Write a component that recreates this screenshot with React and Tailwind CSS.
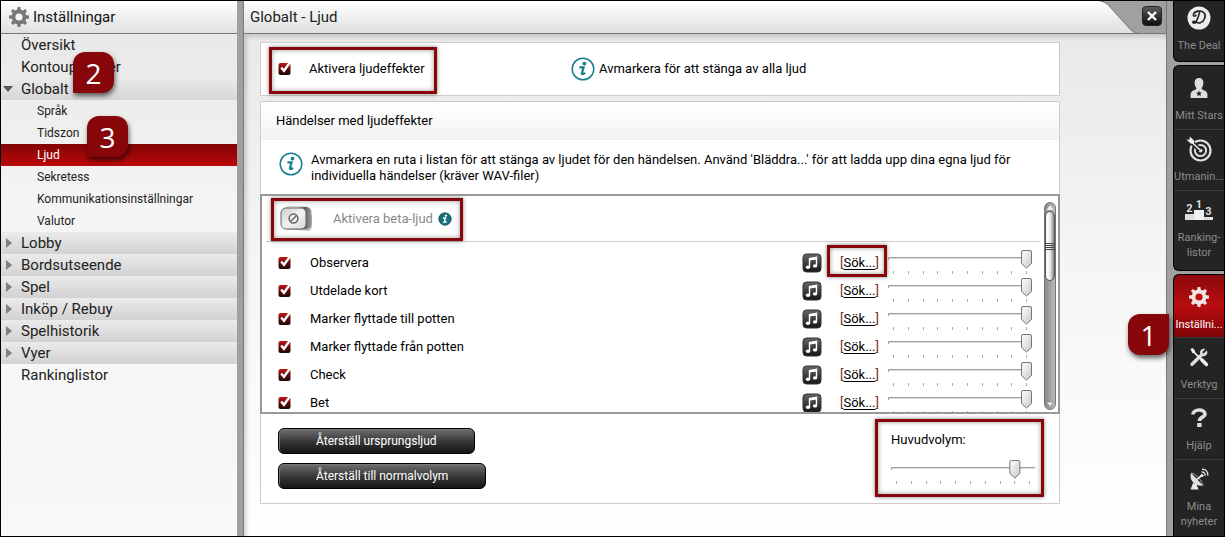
import { useState } from 'react';
import clsx from 'clsx';

const menu = [
  { label: 'Översikt' },
  { label: 'Kontouppgifter', badge: '2' },
  {
    label: 'Globalt',
    open: true,
    children: ['Språk', 'Tidszon', 'Ljud', 'Sekretess', 'Kommunikationsinställningar', 'Valutor'],
  },
  { label: 'Lobby', group: true },
  { label: 'Bordsutseende', group: true },
  { label: 'Spel', group: true },
  { label: 'Inköp / Rebuy', group: true },
  { label: 'Spelhistorik', group: true },
  { label: 'Vyer', group: true },
  { label: 'Rankinglistor' },
];

const sounds = [
  'Observera',
  'Utdelade kort',
  'Marker flyttade till potten',
  'Marker flyttade från potten',
  'Check',
  'Bet',
];

const teeth = [0, 45, 90, 135, 180, 225, 270, 315];

/**
 * Icons
 */
const GearIcon = ({ className, fill, hole }) => (
  <svg viewBox="0 0 20 20" className={className} fill={fill} aria-hidden="true">
    {teeth.map((angle) => (
      <path key={angle} d="M8 4 L8.6 0 H11.4 L12 4 Z" transform={`rotate(${angle} 10 10)`} />
    ))}
    <circle cx="10" cy="10" r="7.4" />
    <circle cx="10" cy="10" r="3.6" fill={hole} />
  </svg>
);

const InfoIcon = () => (
  <svg viewBox="0 0 24 24" className="size-6 shrink-0" fill="none" aria-hidden="true">
    <circle cx="12" cy="12" r="10.8" stroke="#16808c" strokeWidth="1.5" />
    <circle cx="13.4" cy="6.6" r="1.9" fill="#16808c" />
    <path d="M8.4 10.4 H12.6 L10.9 16.2 C10.7 17.6 12.4 17.4 14 15.8" stroke="#16808c" strokeWidth="2.2" />
  </svg>
);

const CheckIcon = () => (
  <svg viewBox="0 0 14 14" className="size-[14px]" aria-hidden="true">
    <defs>
      <linearGradient id="tick-box" x1="0" y1="0" x2="0" y2="1">
        <stop offset="0" stopColor="#c01818" />
        <stop offset="0.55" stopColor="#5a0808" />
        <stop offset="1" stopColor="#1a0a0a" />
      </linearGradient>
    </defs>
    <rect x="0.5" y="1" width="12" height="12" rx="2" fill="url(#tick-box)" />
    <path d="M3.2 5.6 L6 8.8 L11.8 0.6" fill="none" stroke="#fff" strokeWidth="2.4" />
  </svg>
);

const MusicIcon = () => (
  <svg viewBox="0 0 20 20" className="size-5" aria-hidden="true">
    <defs>
      <linearGradient id="music-box" x1="0" y1="0" x2="0" y2="1">
        <stop offset="0" stopColor="#666" />
        <stop offset="1" stopColor="#161616" />
      </linearGradient>
    </defs>
    <rect x="1" y="1" width="18" height="18" rx="3.5" fill="url(#music-box)" stroke="#333" />
    <path d="M7.5 14 V5.6 L14.5 4.4 V12.6" fill="none" stroke="#fff" strokeWidth="1.4" />
    <path d="M7.5 6.6 L14.5 5.4" stroke="#fff" strokeWidth="2" />
    <ellipse cx="6" cy="14.2" rx="2.2" ry="1.7" fill="#fff" />
    <ellipse cx="13" cy="12.9" rx="2.2" ry="1.7" fill="#fff" />
  </svg>
);

const DealIcon = () => (
  <svg viewBox="0 0 24 24" className="size-6" fill="none" aria-hidden="true">
    <circle cx="12" cy="12" r="11.5" fill="#ececec" />
    <path d="M12.6 6.4 C11.6 10 10.4 14 8.4 16.8 M8.4 16.8 C5.8 17.8 5 15.6 7 15.2 C9 15 10.2 17.8 13.2 16.8 C17.8 15.2 19.4 9.6 17 6.8 C14.4 3.8 7.4 4.8 6.4 8.4 C6 10.6 8.4 10.6 9 9.2" stroke="#222" strokeWidth="1.6" strokeLinecap="round" />
  </svg>
);

const PersonIcon = () => (
  <svg viewBox="0 0 20 22" className="h-[22px] w-5" fill="#dedede" aria-hidden="true">
    <path d="M10 1 C13 1 14.6 3 14.4 6 C14.2 9 13 10.2 12.6 11.2 C12.4 13.2 18.4 13 18.4 17.4 V21 H1.6 V17.4 C1.6 13 7.6 13.2 7.4 11.2 C7 10.2 5.8 9 5.6 6 C5.4 3 7 1 10 1 Z" />
    <path d="M10 13.4 L10.8 15.5 L13 15.6 L11.3 17 L11.9 19.2 L10 18 L8.1 19.2 L8.7 17 L7 15.6 L9.2 15.5 Z" fill="#222" />
  </svg>
);

const TargetIcon = () => (
  <svg viewBox="0 0 26 26" className="size-[26px]" fill="none" aria-hidden="true">
    <circle cx="14.5" cy="14.5" r="10" stroke="#dedede" strokeWidth="2.2" />
    <circle cx="14.5" cy="14.5" r="5.6" stroke="#dedede" strokeWidth="2" />
    <circle cx="14.5" cy="14.5" r="2" fill="#dedede" />
    <path d="M3 4 L14 14" stroke="#222" strokeWidth="4.5" />
    <path d="M4 4.5 L14 14" stroke="#eee" strokeWidth="1.7" />
    <path d="M0.5 3.5 L3.5 3.8 L3.8 0.5 L8 4.5 L8 8 L4.5 7.5 Z" fill="#eee" />
  </svg>
);

const PodiumIcon = () => (
  <span className="flex items-end text-[11px] leading-[10px] font-bold text-[#dedede]" aria-hidden="true">
    <span className="flex w-[9px] flex-col items-center">
      2<span className="h-[6px] w-full bg-[#dedede]" />
    </span>
    <span className="flex w-[10px] flex-col items-center">
      1<span className="h-[10px] w-full bg-[#f0f0f0]" />
    </span>
    <span className="flex w-[9px] flex-col items-center">
      3<span className="h-[3px] w-full bg-[#dedede]" />
    </span>
  </span>
);

const ToolsIcon = () => (
  <svg viewBox="0 0 20 20" className="size-5" fill="none" aria-hidden="true">
    <path d="M3 17.2 L12.5 8" stroke="#dedede" strokeWidth="3.4" strokeLinecap="round" />
    <path d="M17.8 3.6 L14.6 6.6 L13.2 5.2 L16.2 2 C13.4 0.6 10.2 3.4 11.2 6.6 C12.2 9.6 15.6 9.8 17.4 8 C18.6 6.8 18.6 4.8 17.8 3.6 Z" fill="#dedede" />
    <path d="M1.4 2 L3.4 1 L6 3.4 L6 5 L14 13 L12.8 14.2 L4.8 6.2 L3.4 6 Z" fill="#eee" />
    <path d="M13 13 L17.4 17.4" stroke="#eee" strokeWidth="3.6" strokeLinecap="round" />
  </svg>
);

const HelpIcon = () => (
  <svg viewBox="0 0 18 20" className="h-5 w-[18px]" fill="none" aria-hidden="true">
    <path d="M3 6.4 C3 0.8 15 0.6 15 6 C15 9.4 9.4 8.8 9.4 13" stroke="#dedede" strokeWidth="3.6" />
    <rect x="7.2" y="15" width="4.4" height="4" fill="#dedede" />
  </svg>
);

const DishIcon = () => (
  <svg viewBox="0 0 20 22" className="h-[22px] w-5" fill="none" aria-hidden="true">
    <path d="M2.2 5 C-0.4 10 4.4 19 14 17.6 Z" fill="#dedede" />
    <path d="M2.2 5 C6 5.4 12.8 11.6 14 17.6" stroke="#aaa" />
    <path d="M4 15 L1.6 21.4 H9.6 L7.4 16 Z" fill="#e8e8e8" />
    <path d="M8 11.4 L13 7.2" stroke="#eee" strokeWidth="1.6" />
    <circle cx="13" cy="7.4" r="1.5" fill="#eee" />
    <path d="M12.6 4 C14.8 3.8 16.4 5.4 16.2 7.8 M13 1.2 C16.8 1 19.2 3.8 18.8 7.6" stroke="#dedede" strokeWidth="1.4" />
  </svg>
);

/**
 * Red frame round a highlighted control
 */
const Frame = ({ className }) => (
  <span
    className={clsx(
      'pointer-events-none absolute border-3 border-[#860609] shadow-[0_0_4px_rgba(0,0,0,0.5),inset_0_0_5px_rgba(0,0,0,0.4)]',
      className
    )}
  />
);

const StepBadge = ({ className, children }) => (
  <span
    className={clsx(
      "absolute z-10 flex size-[41px] items-center justify-center rounded-xl bg-[#860609] font-['Open_Sans',sans-serif] text-[28px] leading-8 text-white shadow-[1px_3px_5px_rgba(0,0,0,0.6)]",
      className
    )}
  >
    {children}
  </span>
);

const Slider = ({ label, initial }) => {
  const [value, setValue] = useState(initial);
  const x = 5.5 + (value / 100) * 133;

  return (
    <span className="relative block h-[26px] w-36">
      <svg viewBox="0 0 144 26" className="block h-[26px] w-36" aria-hidden="true">
        <defs>
          <linearGradient id="thumb" x1="0" y1="0" x2="1" y2="1">
            <stop offset="0" stopColor="#fff" />
            <stop offset="1" stopColor="#c8c8c8" />
          </linearGradient>
        </defs>
        <path d="M0.5 10 V7.5 H144" fill="none" stroke="#9a9f9a" />
        <path d="M1 8.5 H144" stroke="#ddd" />
        {Array.from({ length: 10 }, (_, i) => (
          <path key={i} d={`M${Math.round(i * 14.8) + 5.5} 21 v3`} stroke="#aaa" />
        ))}
        <path
          d={`M${x - 5} 2 q0 -1.5 1.5 -1.5 h7 q1.5 0 1.5 1.5 V13.5 L${x} 18 L${x - 5} 13.5 Z`}
          fill="url(#thumb)"
          stroke="#777"
        />
      </svg>
      <input
        type="range"
        aria-label={label}
        value={value}
        onChange={(e) => setValue(Number(e.target.value))}
        className="absolute inset-0 w-full cursor-pointer opacity-0"
      />
    </span>
  );
};

const Check = ({ label, children }) => (
  <label className="relative flex cursor-pointer items-center">
    <input type="checkbox" defaultChecked aria-label={label} className="peer absolute size-[14px] opacity-0" />
    <CheckIcon />
    {children}
  </label>
);

/**
 * Left settings menu
 */
const Sidebar = () => (
  <aside className="w-[236px] shrink-0 bg-linear-to-b from-[#e6e6e6] via-[#f5f5f5] via-40% to-[#f8f8f8]">
    <div className="flex h-[33px] items-center gap-1 border-b border-[#777] bg-linear-to-b from-white to-[#e0e0e0] pl-2">
      <GearIcon className="size-5" fill="#777" hole="#f4f4f4" />
      <h2 className="text-[15px] text-[#111]">Inställningar</h2>
    </div>
    <nav>
      <ul className="text-[15px] leading-[22px] text-[#222]">
        {menu.map((item) => (
          <li key={item.label} className="relative">
            <a
              href="#"
              className={clsx(
                'flex h-[22px] items-center',
                item.open && 'bg-linear-to-b from-[#eaeaea] to-[#d6d6d6]',
                item.group && 'bg-linear-to-b from-[#ebebeb] to-[#d2d2d2]'
              )}
            >
              <span className="w-5 pl-[2px]">
                {item.open && (
                  <svg viewBox="0 0 10 6" className="h-[6px] w-[10px]" fill="#555" aria-hidden="true">
                    <path d="M0 0 H10 L5 6 Z" />
                  </svg>
                )}
                {item.group && (
                  <svg viewBox="0 0 6 10" className="ml-[3px] h-[10px] w-[6px]" fill="#808080" aria-hidden="true">
                    <path d="M0 0 V10 L6 5 Z" />
                  </svg>
                )}
              </span>
              {item.label}
            </a>
            {item.badge && <StepBadge className="-top-1 left-[72px] rounded-bl-none">{item.badge}</StepBadge>}
            {item.children && (
              <ul className="text-xs leading-[22px]">
                {item.children.map((child) => (
                  <li key={child} className="relative">
                    <a
                      href="#"
                      className={clsx(
                        'block h-[22px] pl-9',
                        child === 'Ljud' && 'bg-linear-to-b from-[#800505] to-[#bd0909] text-white'
                      )}
                    >
                      {child}
                    </a>
                    {child === 'Tidszon' && <StepBadge className="-top-[6px] left-[86px] rounded-bl-sm">3</StepBadge>}
                  </li>
                ))}
              </ul>
            )}
          </li>
        ))}
      </ul>
    </nav>
  </aside>
);

const SoundRow = ({ name, framed }) => (
  <li className="flex h-7 items-center pr-2 pl-3">
    <Check label={name}>
      <span className="ml-[18px]">{name}</span>
    </Check>
    <span className="ml-auto">
      <MusicIcon />
    </span>
    <span className="relative ml-[18px] w-12">
      <a href="#" className="text-black">
        <span className="text-[#7a2a10]">[</span>
        <span className="underline underline-offset-2">Sök...</span>
        <span className="text-[#7a2a10]">]</span>
      </a>
      {framed && <Frame className="-top-2 -left-[13px] h-8 w-[60px]" />}
    </span>
    <Slider label={`Volym ${name}`} initial={100} />
  </li>
);

const ScrollBar = () => (
  <div className="mt-[6px] mb-[2px] flex w-3 shrink-0 flex-col rounded-full border border-[#777] bg-linear-to-r from-[#8a8a8a] to-[#bbb]" aria-hidden="true">
    <svg viewBox="0 0 10 8" className="h-2 w-[10px]">
      <path d="M1.5 7 L5 2 L8.5 7 Z" fill="#eee" />
    </svg>
    <div className="flex h-[70px] flex-col items-center justify-center gap-px rounded-full border border-[#555] bg-linear-to-r from-white via-[#eee] to-[#888]">
      <span className="h-px w-2 bg-[#444]" />
      <span className="h-px w-2 bg-[#444]" />
      <span className="h-px w-2 bg-[#444]" />
      <span className="h-px w-2 bg-[#444]" />
    </div>
    <svg viewBox="0 0 10 8" className="mt-auto h-2 w-[10px]">
      <path d="M1.5 1 L5 6 L8.5 1 Z" fill="#eee" stroke="#777" strokeWidth="0.6" />
    </svg>
  </div>
);

const DarkButton = ({ children }) => (
  <button
    type="button"
    className="h-[26px] rounded-md border border-black bg-linear-to-b from-[#6a6a6a] from-5% via-[#3a3a3a] via-50% to-[#141414] px-[37px] text-xs leading-6 text-white shadow-[inset_1px_1px_0_#777]"
  >
    {children}
  </button>
);

/**
 * Sound settings page
 */
const SoundPage = () => (
  <main className="flex min-w-0 flex-1 flex-col border-x border-[#777] bg-[#a0a0a0]">
    <header className="flex h-[33px] border-b border-[#777]">
      <h1 className="flex-1 bg-linear-to-b from-white to-[#dfdfdf] pl-[6px] text-[15px] leading-8 text-[#222]">
        Globalt - Ljud
      </h1>
      <svg viewBox="0 0 38 32" className="h-8 w-[38px]" aria-hidden="true">
        <defs>
          <linearGradient id="tab-end" x1="0" y1="0" x2="0" y2="1">
            <stop offset="0" stopColor="#fff" />
            <stop offset="1" stopColor="#dfdfdf" />
          </linearGradient>
        </defs>
        <path d="M0 0 C5 1 7 3 9 5 L30 28 C32 30 34 32 38 32 H0 Z" fill="url(#tab-end)" />
        <path d="M0 0 C5 1 7 3 9 5 L30 28 C32 30 34 32 38 32" fill="none" stroke="#777" />
      </svg>
      <button
        type="button"
        aria-label="Stäng"
        className="mt-[5px] mr-1 ml-1 flex size-5 items-center justify-center rounded border border-[#222] bg-linear-to-b from-[#5c5c5c] to-[#111]"
      >
        <svg viewBox="0 0 10 10" className="size-[10px]" stroke="#fff" strokeWidth="2.4" aria-hidden="true">
          <path d="M1 1 L9 9 M9 1 L1 9" />
        </svg>
      </button>
    </header>

    <div className="flex-1 bg-linear-to-b from-[#e9e9e9] via-[#f5f5f5] via-45% to-white pt-2 pr-[106px] pb-6 pl-4 text-[13px] text-black shadow-[inset_3px_3px_4px_rgba(0,0,0,0.15)]">
      <section className="flex h-[54px] items-center border border-[#ccc] bg-white pl-[17px]">
        <div className="relative w-[293px]">
          <Check label="Aktivera ljudeffekter">
            <span className="ml-[17px]">Aktivera ljudeffekter</span>
          </Check>
          <Frame className="-top-3 -left-[9px] h-[47px] w-[168px]" />
        </div>
        <InfoIcon />
        <p className="ml-1">Avmarkera för att stänga av alla ljud</p>
      </section>

      <section className="mt-[5px] border border-[#ccc] bg-white">
        <h3 className="h-[38px] border-b border-[#eee] bg-linear-to-b from-white to-[#f3f3f3] pl-[15px] leading-[38px]">
          Händelser med ljudeffekter
        </h3>
        <div className="flex h-[54px] items-start gap-2 pt-3 pl-[18px]">
          <InfoIcon />
          <p className="max-w-[730px] leading-4">
            Avmarkera en ruta i listan för att stänga av ljudet för den händelsen. Använd 'Bläddra...' för att ladda
            upp dina egna ljud för individuella händelser (kräver WAV-filer)
          </p>
        </div>

        <div className="-mx-px flex h-[220px] overflow-hidden border-2 border-[#999] pr-[2px] pl-1">
          <div className="mr-1 flex-1">
            <div className="relative flex h-[46px] items-center border-b border-[#ccc] pl-[14px]">
              <button type="button" role="switch" aria-checked="false" aria-label="Aktivera beta-ljud">
                <svg viewBox="0 0 34 28" className="h-7 w-[34px]" aria-hidden="true">
                  <defs>
                    <linearGradient id="switch-side" x1="0" y1="0" x2="1" y2="0">
                      <stop offset="0.5" stopColor="#fff" />
                      <stop offset="0.75" stopColor="#555" />
                      <stop offset="1" stopColor="#999" />
                    </linearGradient>
                    <linearGradient id="switch-face" x1="0" y1="0" x2="1" y2="1">
                      <stop offset="0" stopColor="#ccc" />
                      <stop offset="0.5" stopColor="#f2f2f2" />
                      <stop offset="1" stopColor="#d8d8d8" />
                    </linearGradient>
                  </defs>
                  <path d="M6 24 L28 26 Q32 26 32 20 V10 Z" fill="#c4c4c4" />
                  <rect x="3" y="2" width="28" height="22" rx="5" fill="url(#switch-side)" stroke="#777" strokeWidth="0.6" />
                  <rect x="1" y="3" width="25" height="21" rx="5" fill="url(#switch-face)" stroke="#666" />
                  <circle cx="13.5" cy="13.5" r="4.4" fill="none" stroke="#666" strokeWidth="1.5" />
                  <path d="M10.5 16.5 L16.5 10.5" stroke="#666" strokeWidth="1.5" />
                </svg>
              </button>
              <span className="ml-[19px] text-[#888]">Aktivera beta-ljud</span>
              <svg viewBox="0 0 14 14" className="ml-[5px] size-[14px]" aria-hidden="true">
                <circle cx="7" cy="7" r="6.2" fill="#14707c" stroke="#0b4750" strokeWidth="0.8" />
                <circle cx="8" cy="3.6" r="1.2" fill="#fff" />
                <path d="M5 6 H7.4 L6.2 10.2 L8.6 9.8" fill="none" stroke="#fff" strokeWidth="1.6" />
              </svg>
              <Frame className="top-[2px] left-[5px] h-[43px] w-[192px]" />
            </div>
            <ul className="pt-[7px]">
              {sounds.map((name, index) => (
                <SoundRow key={name} name={name} framed={index === 0} />
              ))}
            </ul>
          </div>
          <ScrollBar />
        </div>

        <div className="flex justify-between pt-[14px] pr-6 pb-[14px] pl-[17px]">
          <div className="flex flex-col items-start gap-[9px]">
            <DarkButton>Återställ ursprungsljud</DarkButton>
            <DarkButton>Återställ till normalvolym</DarkButton>
          </div>
          <div className="relative">
            <p className="mt-[2px] mb-[10px]">Huvudvolym:</p>
            <Slider label="Huvudvolym" initial={89} />
            <Frame className="-top-[9px] -left-4 h-[78px] w-[169px]" />
          </div>
        </div>
      </section>
    </div>
  </main>
);

/**
 * Right toolbar
 */
const NavItem = ({ icon, label, active, first }) => (
  <a
    href="#"
    className={clsx(
      'flex flex-col items-center',
      active && 'rounded-tl-md bg-linear-to-b from-[#8c0a0c] via-[#b80c0f] to-[#7d0507] pt-[10px] pb-[5px] text-white',
      first && 'pt-2 pb-[6px] text-[#8c8c8c]',
      !active && !first && 'border-t border-[#3a3a3a] pt-[7px] pb-[6px] text-[#8c8c8c]'
    )}
  >
    <span className="flex h-6 items-center">{icon}</span>
    <span className="mt-2 text-center text-[11px] leading-[15px] whitespace-pre">{label}</span>
  </a>
);

const Toolbar = () => (
  <nav className="flex w-[51px] shrink-0 flex-col gap-[3px] overflow-hidden bg-[#a0a0a0]">
    <div className="-mt-[3px] rounded-bl-md border-b border-l border-black bg-[#242424] pb-[2px]">
      <NavItem icon={<DealIcon />} label="The Deal" first />
    </div>
    <div className="rounded-l-md border-y border-l border-black bg-[#242424] pt-[2px] pb-1">
      <NavItem icon={<PersonIcon />} label="Mitt Stars" first />
      <NavItem icon={<TargetIcon />} label="Utmanin..." />
      <NavItem icon={<PodiumIcon />} label={'Ranking-\nlistor'} />
    </div>
    <div className="flex-1 rounded-tl-md border-t border-l border-black bg-[#242424]">
      <NavItem icon={<GearIcon className="size-5" fill="#f0e4e4" hole="#c40d10" />} label="Inställni..." active />
      <NavItem icon={<ToolsIcon />} label="Verktyg" />
      <NavItem icon={<HelpIcon />} label="Hjälp" />
      <NavItem icon={<DishIcon />} label={'Mina\nnyheter'} />
    </div>
  </nav>
);

function App() {
  return (
    <div className="relative flex min-h-screen border border-black bg-[#a0a0a0] font-[Roboto,sans-serif]">
      <Sidebar />
      <div className="w-[6px] shrink-0 bg-[#a0a0a0]" />
      <SoundPage />
      <div className="w-[6px] shrink-0 bg-[#a0a0a0]" />
      <Toolbar />
      <StepBadge className="top-[313px] right-[55px] rounded-tr-none">1</StepBadge>
    </div>
  );
}

export default App;
